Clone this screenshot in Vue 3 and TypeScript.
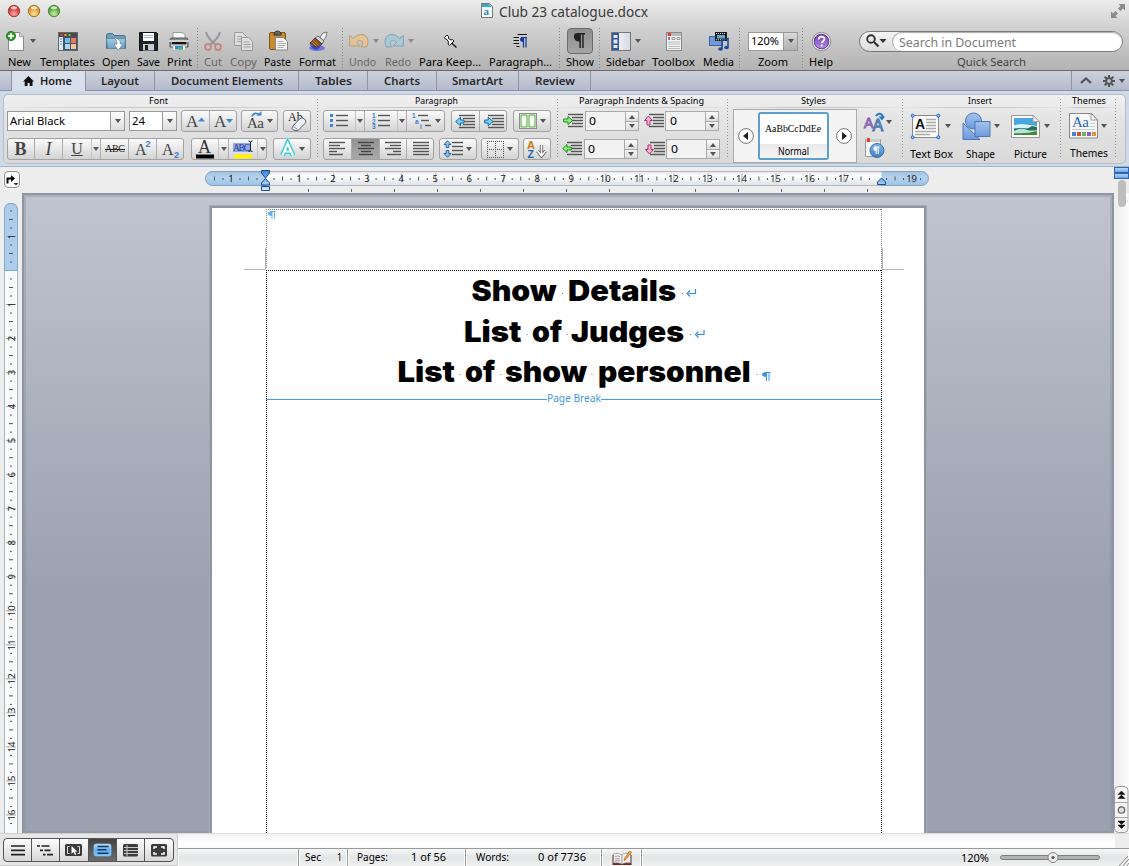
<script setup lang="ts">
import { h } from 'vue'

interface LabelProps { t: string; w: number; s?: number; c?: string; b?: number; f?: string; h?: number }

// Text fitted to a fixed width.
const Lbl = (p: LabelProps) => {
  const height = p.h ?? 14
  const size = p.s ?? 11.5
  return h('svg', { width: p.w, height, class: 'lbl', overflow: 'visible' }, [
    h('text', {
      x: 0, y: height - 3, textLength: p.w, lengthAdjust: 'spacingAndGlyphs',
      'font-size': size, 'font-weight': p.b ?? 400, fill: p.c ?? '#000',
      'font-family': p.f ?? '"Noto Sans", "Open Sans", sans-serif',
    }, p.t),
  ])
}
Lbl.props = ['t', 'w', 's', 'c', 'b', 'f', 'h']

const lines = (x: number, y: number, ws: number[], step = 3, c = '#555', offs: number[] = []) =>
  ws.map((w, i) => `<path d="M${x + (offs[i] ?? 0)} ${y + i * step}.5h${w}" stroke="${c}" stroke-width="1.4"/>`).join('')

const icons: Record<string, string> = {
  newdoc: '<path d="M3.5 4.500h11l4 4v14h-15z" transform="translate(-1 -3)" fill="#fdfdfd" stroke="#888"/><path d="M13.500 1.500v4h4" fill="#ddd" stroke="#999"/><circle cx="5" cy="5" r="4.600" fill="#2f9a28" stroke="#1d6e1a" stroke-width=".8"/><path d="M5 2.200v5.600M2.200 5h5.600" stroke="#fff" stroke-width="2"/>',
  templates: '<rect x=".5" y=".5" width="19" height="18" fill="#dbe8f4" stroke="#666"/><path d="M1 1h18v4H1z" fill="#4a4a4a"/><path d="M2.500 2h2v2h-2z" fill="#f33"/><path d="M6.500 2h2v2h-2z" fill="#fa3"/><path d="M10.500 2h2v2h-2z" fill="#5d3"/><path d="M5 5h14v13H5z" fill="#44556a"/><path d="M7 6h5v5H7z" fill="#76b8ec"/><path d="M13 6h5v5h-5z" fill="#e87a58"/><path d="M7 12h5v5H7z" fill="#aed6f5"/><path d="M13 12h5v5h-5z" fill="#f4c590"/><path d="M2 7h2M2 9.500h2M2 12h2" stroke="#5b93c6"/>',
  open: '<path d="M.5 3.500q0-2 2-2h4l2 2h9q2 0 2 2v11h-19z" fill="#6e9fbd" stroke="#44708d"/><path d="M.5 6.500h19l-1 10h-17z" fill="url(#gFolder)" stroke="#5b8baa"/><path d="M8 6c5 0 6.500 3 6.300 6h2.700l-4.800 6.500L8 12h3c0-3-.5-4-3-6z" fill="#fff" stroke="#5d7f95" stroke-width=".7"/>',
  save: '<path d="M.5.5h17l1 1v17H.5z" fill="#20252c" stroke="#111"/><path d="M4 1h11v8H4z" fill="#fff"/><path d="M5 3.500h9M5 5.500h9" stroke="#9bb3d0"/><path d="M4 12h11v6.500H4z" fill="#c7ccd2"/><path d="M6 13h3v5H6z" fill="#222"/>',
  print: '<path d="M4 7V.5h9l3 2V7" fill="#fff" stroke="#999"/><path d="M1 8q0-2 2-2h14q2 0 2 2v7H1z" fill="#8b8b8b" stroke="#555"/><path d="M0 8h20v2H0z" fill="#d0d0d0"/><path d="M3 10h14v2.500H3z" fill="#111"/><path d="M2 12.500h16v2H2z" fill="#ddd"/><path d="M4 13.500h12v5H4z" fill="#fff" stroke="#aaa" stroke-width=".6"/><path d="M6 14h8v3.500H6z" fill="#2b8bd0"/><path d="M9 15h5v2.500H9z" fill="#48b070"/>',
  cut: '<g opacity=".6"><path d="M2 0c1 4 5 9 10 13M16 0c-1 4-5 9-10 13" stroke="#777" stroke-width="2" fill="none"/><ellipse cx="4" cy="15" rx="3" ry="3" fill="none" stroke="#c8604e" stroke-width="1.800"/><ellipse cx="14" cy="15" rx="3" ry="3" fill="none" stroke="#c8604e" stroke-width="1.800"/></g>',
  copy: '<g opacity=".55"><path d="M.5.5h8l4 4v9H.5z" fill="#eee" stroke="#777"/><path d="M3 4.500h5M3 7h6M3 9.500h4" stroke="#888"/><path d="M7.500 5.500h7l4 4v9h-11z" fill="#f2f2f2" stroke="#777"/><path d="M9.500 10h6M9.500 12.500h7M9.500 15h7" stroke="#888"/></g>',
  paste: '<rect x=".5" y="1.500" width="16" height="17" rx="1.500" fill="#c88c2d" stroke="#805413"/><path d="M5 4V2q3.500-4 7 0v2z" fill="#666" stroke="#333"/><path d="M6.500 6.500h8l4 4v8.500h-12z" fill="#f6f6f6" stroke="#888"/><path d="M8.500 10.500h6M8.500 12.500h8M8.500 14.500h8M8.500 16.500h6" stroke="#999" stroke-width=".8"/>',
  format: '<ellipse cx="9" cy="16" rx="8" ry="3" fill="#5d66dc" opacity=".8"/><path d="M12 5l3-4 4-1-1 5-3 4z" fill="#efefef" stroke="#777"/><path d="M10 4l6 5-2 3-7-6z" fill="#d5d8dc" stroke="#666"/><path d="M7 6l7 6-4 3q-4 1-8-4z" fill="#8a5420" stroke="#4e2d10" stroke-width=".8"/><path d="M1 11q4 5 9 4l3-1-4 4q-5 0-8-7z" fill="#2b47d9"/><path d="M5 8l5 5M3.500 9.500l5 5" stroke="#c8914d" stroke-width=".7"/>',
  undo: '<path d="M.7 2.500v10.500h10.500L7.300 9.500c3-3.500 7-2 6.500 1.500-.2 1-.8 2-1.500 3h5c3.500-5 1.500-12-4.500-12.500C9.500 1.300 6.500 3 4.500 5.500z" fill="#e3c498" stroke="#b39a72" stroke-width=".9"/>',
  redo: '<path transform="matrix(-1 0 0 1 20 0)" d="M.7 2.500v10.500h10.500L7.300 9.500c3-3.500 7-2 6.500 1.500-.2 1-.8 2-1.500 3h5c3.500-5 1.500-12-4.500-12.500C9.500 1.300 6.500 3 4.500 5.500z" fill="#a9c8d8" stroke="#7a9fb3" stroke-width=".9"/>',
  pin: '<path d="M8 8.500l5.500 5" stroke="#111" stroke-width="1.300"/><path d="M1.500 3.500L4 1l1.500 1.500v2L8 6l1.500-.5L11 7l-4.500 4.500L5 10l.5-2L4 5.500 2.500 5z" fill="#fff" stroke="#111"/>',
  para: '<path d="M4.500.5h9.500M.5 3.500h5.500M.5 6.500h5.500M.5 9.500h5.500M3.500 12.500h3M10 3.500h4" stroke="#111"/><path d="M8 3.500h5v10M10.500 3.500v10" stroke="#163a9b" stroke-width="1.200" fill="none"/><path d="M10 3c-4 0-4 5 0 5z" fill="#163a9b"/>',
  show: '<path d="M5 0h8v1.600h-1.300V15h-1.500V1.600H8.900V15H7.400V8.500C.5 8.500.5 0 5 0z" fill="#222"/>',
  sidebar: '<rect x=".5" y=".5" width="19" height="18" fill="url(#gWin)" stroke="#777"/><path d="M1 1h7v17H1z" fill="#3355a5"/><path d="M2.500 3h4v3h-4zM2.500 7.500h4v4h-4zM2.500 13h4v3h-4z" fill="#e2eaf8"/>',
  toolbox: '<rect x=".5" y=".5" width="15" height="18" fill="#f3f3f3" stroke="#888"/><path d="M1 1h14v3H1z" fill="#bbb"/><path d="M2 1h3v3H2z" fill="#e33"/><path d="M6 5.500h3v2H6zM11 5.500h3v2h-3z" fill="none" stroke="#888" stroke-width=".8"/><path d="M2 10h12M2 12h12M2 14.500h12M2 16.500h12" stroke="#bbb"/><path d="M2 5h2v3H2z" fill="#888"/>',
  media: '<rect x=".5" y="4.500" width="13" height="9" fill="#6f9bd6" stroke="#3b61a3"/><rect x="6" y="0" width="12" height="9" fill="#1d1d1d"/><path d="M7 1.500h10M7 7.700h10" stroke="#ddd" stroke-dasharray="1 1"/><path d="M8 3h8v3.500H8z" fill="#69a9c6"/><path d="M13 17V8l6-1.500V15" fill="none" stroke="#204a94" stroke-width="1.600"/><ellipse cx="11.500" cy="17" rx="2.300" ry="1.800" fill="#204a94"/><ellipse cx="17.500" cy="15.500" rx="2.300" ry="1.800" fill="#204a94"/>',
  help: '<circle cx="9.500" cy="9.500" r="9.200" fill="#eee" stroke="#8d8d8d"/><circle cx="9.500" cy="9.500" r="7.300" fill="url(#gHelp)" stroke="#5f389e"/><path d="M6.700 7.600c0-4 5.800-3.800 5.800-.5 0 2-2.700 2.200-2.700 4" fill="none" stroke="#fff" stroke-width="1.700"/><circle cx="9.800" cy="13.600" r="1.100" fill="#fff"/>',
  home: '<path d="M5.500 0L11 5.500H9.500V10H6.700V7H4.500v3H1.700V5.500H0z" fill="#111"/>',
  grow: '<text x="0" y="15" font-family="Liberation Serif" font-size="17" fill="#444">A</text><path d="M12 9.500l3.500-4 3.500 4z" fill="#3d87d8"/>',
  shrink: '<text x="0" y="15" font-family="Liberation Serif" font-size="17" fill="#444">A</text><path d="M12 7l3.500 4L19 7z" fill="#3d87d8"/>',
  aa: '<text x="0" y="17" font-family="Liberation Serif" font-size="15" textLength="17" fill="#444">Aa</text><path d="M5 5.500c1.500-4 6-4 7-1" fill="none" stroke="#3b84ce" stroke-width="1.600"/><path d="M9.500 4.500h5V0z" fill="#3b84ce"/>',
  clear: '<text x="0" y="10" font-family="Liberation Serif" font-size="12" fill="#222">Ab</text><path d="M4.500 15.500l7.500-8q2-1.500 4.500.5t.5 4.500l-7 7q-2 1-4.500-.5t-1-3.500z" fill="#eef1f8" stroke="#59616f"/><path d="M4.500 15.500q3.500.5 5.500 4" fill="none" stroke="#8a93a4"/>',
  abc: '<text x="0" y="9" font-family="Liberation Serif" font-size="10" textLength="20" fill="#222">ABC</text><path d="M0 6.500h20" stroke="#222"/>',
  sup: '<text x="0" y="16" font-family="Liberation Serif" font-size="16" fill="#444">A</text><text x="10.500" y="8" font-family="Liberation Sans" font-size="9" font-weight="700" fill="#3d7fd0">2</text>',
  sub: '<text x="0" y="16" font-family="Liberation Serif" font-size="16" fill="#444">A</text><text x="12" y="18.500" font-family="Liberation Sans" font-size="9" font-weight="700" fill="#3d7fd0">2</text>',
  color: '<text x="2" y="13" font-family="Liberation Serif" font-size="18" fill="#333">A</text><path d="M0 14.500h18v4H0z" fill="#000"/>',
  hilite: '<path d="M0 3h18v9H0z" fill="#8fa9e8"/><text x="0" y="11" font-family="Liberation Serif" font-size="9.500" textLength="17" fill="#223a8c">ABC</text><path d="M1 14.500h18v4H1z" fill="#fff200"/><path d="M15.500 1q2 0 2 1.500 0-1.500 2-1.500M17.500 2v8M15.500 11.500q2 0 2-1.500 0 1.500 2 1.500" fill="none" stroke="#222"/>',
  glow: '<path d="M2.500 15.500L7.700 3.500 13 15.500M4.500 11.500h6.500" fill="none" stroke="#9ce6ee" stroke-width="6"/><path d="M2.500 15.500L7.700 3.500 13 15.500M4.500 11.500h6.500" fill="none" stroke="#35c6d8" stroke-width="4.500"/><path d="M2.500 15.500L7.700 3.500 13 15.500M4.500 11.500h6.500" fill="none" stroke="#fff" stroke-width="2.200"/>',
  bullets: '<path d="M0 1h3v3H0zM0 6h3v3H0zM0 11h3v3H0z" fill="#3d87d8"/>' + lines(6, 2, [12, 12, 12], 5),
  numbers: '<text font-family="Liberation Sans" font-weight="700" font-size="6.500" fill="#3d7fd0"><tspan x="0" y="5">1</tspan><tspan x="0" y="10.500">2</tspan><tspan x="0" y="16">3</tspan></text>' + lines(6, 2, [12, 12, 12], 5),
  multi: '<text font-family="Liberation Sans" font-weight="700" font-size="6.500" fill="#3d7fd0"><tspan x="0" y="5">1</tspan><tspan x="3" y="10.500">a</tspan><tspan x="8" y="16">i</tspan></text>' + lines(6, 2, [10, 8, 6], 5, '#555', [0, 3, 7]),
  outdent: lines(4, 1, [16, 12, 12, 12, 16], 3, '#555', [0, 4, 4, 4, 0]) + '<path d="M.7 7.500l4.800-4.300v2.800h3.500v3H5.500v2.800z" fill="#7fd0f5" stroke="#1468a8"/>',
  indent: lines(4, 1, [16, 12, 12, 12, 16], 3, '#555', [0, 4, 4, 4, 0]) + '<path d="M9 7.500L4.200 3.200v2.800H.7v3h3.500v2.800z" fill="#7fd0f5" stroke="#1468a8"/>',
  columns: '<rect x=".5" y=".5" width="17" height="15" fill="#fff" stroke="#8e8e8e"/><path d="M2 2h6v12H2zM10 2h6v12h-6z" fill="#f4fff0" stroke="#4ca33a"/>',
  left: lines(0, 0, [16, 11, 16, 8, 14], 3),
  center: lines(0, 0, [16, 10, 16, 10, 14], 3, '#444', [0, 3, 0, 3, 1]),
  right: lines(0, 0, [16, 11, 16, 8, 14], 3, '#555', [0, 5, 0, 8, 2]),
  full: lines(0, 0, [16, 16, 16, 16, 16], 3),
  spacing: '<path d="M3.500.7L7 4.500H4.800v3H2.200v-3H0zM3.500 17.300L0 13.500h2.200v-3h2.600v3H7z" fill="#8fc2f5" stroke="#23599c" stroke-width=".9"/>' + lines(8, 2, [11, 11, 11, 11], 4),
  borders: '<path d="M0 .5h17M0 8.500h17M0 16.500h17M.5 0v17M8.500 0v17M16.500 0v17" fill="none" stroke="#555" stroke-dasharray="1 1"/>',
  sort: '<text x="0" y="8.500" font-family="Liberation Sans" font-weight="700" font-size="11" fill="#c8791c">A</text><text x="0.500" y="18" font-family="Liberation Sans" font-weight="700" font-size="10.500" fill="#275fae">Z</text><path d="M14.500 5v10m-4-4l4 5 4-5" fill="none" stroke="#555" stroke-width="3.200"/><path d="M14.500 5v10m-4-4l4 5 4-5" fill="none" stroke="#fff" stroke-width="1.600"/>',
  inL: lines(5, 0, [15, 11, 11, 11, 15], 3, '#555', [0, 4, 4, 4, 0]) + '<path d="M9.500 6.500L5 2.500v2.500H.7v3H5v2.500z" fill="#8df07a" stroke="#1d8f1c"/>',
  inR: lines(5, 0, [15, 11, 11, 11, 15], 3, '#555', [0, 4, 4, 4, 0]) + '<path d="M.7 6.500L5 2.500v2.500h4.300v3H5v2.500z" fill="#8df07a" stroke="#1d8f1c"/>',
  up: lines(5, 0, [15, 11, 11, 11, 15], 3, '#555', [0, 4, 4, 4, 0]) + '<path d="M4.500 2l4 4.500H6v4.500H3V6.500H.5z" fill="#f7b6d4" stroke="#b5316f"/>',
  down: lines(5, 0, [15, 11, 11, 11, 15], 3, '#555', [0, 4, 4, 4, 0]) + '<path d="M4.500 12l4-4.500H6V3H3v4.500H.5z" fill="#f7b6d4" stroke="#b5316f"/>',
  aas: '<text x="-1" y="15.500" font-family="Liberation Sans" font-size="14" fill="#c9b0e0" stroke="#8a62b5" stroke-width="1">A</text><text x="7.500" y="18.500" font-family="Liberation Sans" font-size="16" fill="#a8c8ec" stroke="#4274ad" stroke-width="1">A</text><path d="M11 4c2-3.500 6-3 7 1" stroke="#2577c4" stroke-width="2" fill="none"/><path d="M13.500 4.500h6.500l-3 4z" fill="#2577c4"/>',
  pane: '<path d="M.5 1.500h15v17H.5z" fill="#f7f7f7" stroke="#999"/><path d="M1 1h14v3H1z" fill="#ccc"/><path d="M2 0h3v4H2z" fill="#e0402d"/><circle cx="12" cy="12.500" r="7" fill="url(#gBlue)" stroke="#3870b0"/><path d="M9.500 9h5M13.200 9v7M11.200 9v7" stroke="#fff" stroke-width="1.100"/><path d="M11 8.500c-3.500 0-3.500 4.500 0 4.500z" fill="#fff"/>',
  textbox: '<rect x="1.500" y="1.500" width="26" height="22" fill="#fafafa" stroke="#888"/><text x="4" y="15" font-family="Liberation Sans" font-weight="700" font-size="14" fill="#111">A</text><path d="M15 5.500h10M15 8.500h10M15 11.500h10M15 14.500h10M4 17.500h21M4 20.500h15" stroke="#aaa" stroke-width="1.300"/><g fill="#9cc6ff" stroke="#1763df"><circle cx="1.700" cy="1.700" r="1.500"/><circle cx="27.300" cy="1.700" r="1.500"/><circle cx="1.700" cy="23.300" r="1.500"/><circle cx="27.300" cy="23.300" r="1.500"/></g>',
  shape: '<circle cx="11.500" cy="9" r="8" fill="url(#gShape)" stroke="#4c78b8"/><path d="M1 11v16.500h17z" fill="url(#gShape)" stroke="#4c78b8"/><rect x="13" y="9.500" width="15" height="15" fill="url(#gShape)" stroke="#4c78b8"/>',
  picture: '<path d="M.5 1.500h22l6 6v16H.5z" fill="#fcfcfc" stroke="#999"/><path d="M3 4h19l4 4v13H3z" fill="#49a6dc"/><path d="M3 11l8-1 15 2v2H3z" fill="#d9f3fb"/><path d="M3 15l8-1 5 1 5-3 5 1v8H3z" fill="#2d6f58"/><path d="M3 17q7-4 13-1 5 1 10 0v4l-12 1H3z" fill="#bce4dc"/><path d="M3 19q12 1 23-2v4H3z" fill="#438a35"/><path d="M22 1.500l6.500 6h-6.500z" fill="#eee" stroke="#aaa"/>',
  theme: '<path d="M.5.5h22l6 6v18.500H.5z" fill="#f8f8f8" stroke="#888"/><path d="M22 .5l6.500 6.500h-6.500z" fill="#fff" stroke="#999"/><text x="3" y="14" font-family="Liberation Serif" font-size="15" textLength="17" fill="#2d66b3">Aa</text><path d="M21 10.500h5M21 13.500h5M3 16.500h23" stroke="#ccc"/><path d="M3 19h4v4H3z" fill="#4d83c4"/><path d="M8 19h4v4H8z" fill="#cf4e45"/><path d="M13 19h4v4h-4z" fill="#7eb04e"/><path d="M18 19h4v4h-4z" fill="#8b5fc2"/><path d="M23 19h4v4h-4z" fill="#e5923e"/>',
  docx: '<path d="M.5.5h8l3 3v11H.5z" fill="#f3fafe" stroke="#777"/><path d="M1 1h7l3 3H1z" fill="#3ea7c9"/><text x="2.500" y="12" font-family="Liberation Serif" font-weight="700" font-size="11" fill="#3789b4">a</text>',
  full2: '<path d="M7.500 0H14v6.500L12 4.500 9.500 7 7 4.500 9.500 2zM6.500 14H0V7.500l2 2L4.500 7 7 9.500 4.500 12z" fill="#8b8b8b"/>',
  mag: '<circle cx="5" cy="5" r="3.800" fill="none" stroke="#333" stroke-width="1.900"/><path d="M8 8l4.500 4.500" stroke="#333" stroke-width="2.300"/><path d="M13.500 5h7L17 9z" fill="#333"/>',
  gear: '<g stroke="#555" stroke-width="2"><path d="M6 0v12M0 6h12M1.700 1.700l8.600 8.600M1.700 10.300l8.600-8.600"/></g><circle cx="6" cy="6" r="3.700" fill="#555"/><circle cx="6" cy="6" r="1.900" fill="#c0c4d2"/>',
  chev: '<path d="M1 6l5-4.500L11 6" fill="none" stroke="#555" stroke-width="2.200"/>',
  tab: '<path d="M1.500 8.500V3.500h4" fill="none" stroke="#000" stroke-width="2"/><path d="M5 0l4 3.500L5 7z" fill="#000"/><path d="M7.500 8h5L10 10.500z" fill="#333"/>',
  book: '<path d="M.5 5h19v10H.5z" fill="#6a2a24"/><path d="M1.500 4q5-2 8.500 1 3-3 8.500-1v9q-5-1-8.500 1-4-2-8.500-1z" fill="#f4f2ee" stroke="#888" stroke-width=".7"/><path d="M10 5v9M3 6.500q3-1 5 0M3 9q3-1 5 0M3 11q3-1 5 0" stroke="#999" fill="none"/><path d="M12.500 8.500L17.500 1l2 1-5.500 7.500-2 1z" fill="#f0a23c" stroke="#a8551d" stroke-width=".6"/>',
  v1: '<path d="M0 1h14M0 5.300h14M0 9.600h14" transform="translate(3 2)" stroke="#222" stroke-width="1.700"/>',
  v2: '<path d="M1 3h3M5.500 3h8M4 7.300h3M8.500 7.300h6M7 11.600h2.500M11 11.600h6" stroke="#222" stroke-width="1.700"/>',
  v3: '<rect x="1" y="1" width="17" height="12" rx="1.500" fill="#3b3b3b"/><path d="M5.500 3.500h-2v7h2M13.500 3.500h2v7h-2" stroke="#ddd" fill="none"/><path d="M7.500 3v8l2-2 1.500 3 1.200-.6L11 8.500h2.500z" fill="#fff"/>',
  v4: '<rect x="1" y="1" width="17" height="12" rx="2" fill="url(#gSel)" stroke="#9fd3ff" stroke-width=".6"/><path d="M4.500 3.500h11M4.500 6.800h9M4.500 10.200h11" stroke="#15365c" stroke-width="1.600"/>',
  v5: '<rect x="2" y="1" width="15" height="12.500" rx="1.500" fill="#3b3b3b"/><path d="M3 4.500h14M3 7.500h14M3 10.500h14M6 2v11" stroke="#c9c9c9"/>',
  v6: '<rect x="2" y="1" width="16" height="12.500" rx="1.500" fill="#3b3b3b"/><path d="M5 6V4h3M12 4h3v2M15 9v2h-3M8 11H5V9" stroke="#fff" stroke-width="1.500" fill="none"/>',
}

interface Tool { gap: number; w: number; label?: string; icon?: string; iw?: number; ih?: number; dx?: number; caret?: number; c?: string; sep?: boolean }
const tools: Tool[] = [
  { gap: 8, w: 23, label: 'New', icon: 'newdoc', iw: 20, ih: 20, dx: -4, caret: 13 },
  { gap: 9, w: 55, label: 'Templates', icon: 'templates', iw: 20, ih: 19 },
  { gap: 7, w: 28, label: 'Open', icon: 'open', iw: 20, ih: 19 },
  { gap: 7, w: 23, label: 'Save', icon: 'save', iw: 19, ih: 19 },
  { gap: 7, w: 25, label: 'Print', icon: 'print', iw: 20, ih: 19, dx: -0.5 },
  { gap: 5, w: 1, sep: true },
  { gap: 6, w: 18, label: 'Cut', icon: 'cut', iw: 18, ih: 19, c: '#666' },
  { gap: 8, w: 27, label: 'Copy', icon: 'copy', iw: 19, ih: 19, c: '#666' },
  { gap: 7, w: 27, label: 'Paste', icon: 'paste', iw: 19, ih: 20, dx: 0.5 },
  { gap: 8, w: 37, label: 'Format', icon: 'format', iw: 20, ih: 19 },
  { gap: 6, w: 1, sep: true },
  { gap: 6, w: 27, label: 'Undo', icon: 'undo', iw: 20, ih: 17, dx: -4, caret: 13, c: '#666' },
  { gap: 9, w: 26, label: 'Redo', icon: 'redo', iw: 20, ih: 17, dx: -4, caret: 13, c: '#666' },
  { gap: 8, w: 62, label: 'Para Keep…', icon: 'pin', iw: 14, ih: 15 },
  { gap: 8, w: 63, label: 'Paragraph…', icon: 'para', iw: 15, ih: 15 },
  { gap: 7, w: 1, sep: true },
  { gap: 6, w: 28, label: 'Show', icon: 'show', iw: 16, ih: 16 },
  { gap: 5, w: 1, sep: true },
  { gap: 6, w: 39, label: 'Sidebar', icon: 'sidebar', iw: 20, ih: 19, dx: -4.5, caret: 12.5 },
  { gap: 7, w: 43, label: 'Toolbox', icon: 'toolbox', iw: 16, ih: 19 },
  { gap: 8, w: 31, label: 'Media', icon: 'media', iw: 20, ih: 19 },
  { gap: 5, w: 1, sep: true },
]

const tabs = [
  { t: 'Layout', w: 69, l: 38 }, { t: 'Document Elements', w: 144, l: 112 }, { t: 'Tables', w: 69, l: 37 },
  { t: 'Charts', w: 69, l: 36 }, { t: 'SmartArt', w: 82, l: 51 }, { t: 'Review', w: 72, l: 40 },
]

const U = 34.03
const hNums = Array.from({ length: 21 }, (_, i) => i - 1).filter(n => n !== 0 && n !== 18 && n < 20)
const hTicks: { x: number; k: number }[] = []
for (let q = -6; q <= 77; q++) if (q % 4 !== 0) hTicks.push({ x: 60.5 + (q * U) / 4, k: Math.abs(q % 2) })
const hTabs = Array.from({ length: 14 }, (_, i) => 103 + i * 43)
const vNums = Array.from({ length: 18 }, (_, i) => i - 1).filter(n => n !== 0)
const vTicks: { y: number; k: number }[] = []
for (let q = -7; q <= 65; q++) if (q % 4 !== 0) vTicks.push({ y: 67.5 + (q * U) / 4, k: Math.abs(q % 2) })

const heads = [
  { h: 41, words: [['Show', 205.5, 85], ['Details', 302, 108]], dots: [296.5, 416.5], end: 420, ret: true },
  { h: 40, words: [['List', 198, 57.500], ['of', 266, 30], ['Judges', 305, 113]], dots: [261, 301, 424.5], end: 428.5, ret: true },
  { h: 41, words: [['List', 131.5, 57.500], ['of', 199, 30], ['show', 239, 82], ['personnel', 332, 152.500]], dots: [194, 235, 326, 491], end: 495.5, ret: false },
] as { h: number; words: [string, number, number][]; dots: number[]; end: number; ret: boolean }[]

const views = ['v1', 'v2', 'v3', 'v4', 'v5', 'v6']
</script>

<template>
  <div class="win">
    <svg class="defs" width="0" height="0">
      <defs>
        <linearGradient id="gFolder" x2="0" y2="1"><stop offset="0" stop-color="#a5cbe0" /><stop offset="1" stop-color="#6fa3c2" /></linearGradient>
        <linearGradient id="gWin" x2="1" y2="0"><stop offset="0" stop-color="#fff" /><stop offset="1" stop-color="#d5d8e6" /></linearGradient>
        <linearGradient id="gHelp" x2="0" y2="1"><stop offset="0" stop-color="#7040b4" /><stop offset="1" stop-color="#b48be6" /></linearGradient>
        <linearGradient id="gBlue" x2="0" y2="1"><stop offset="0" stop-color="#86b7e8" /><stop offset="1" stop-color="#3f7fc6" /></linearGradient>
        <linearGradient id="gShape" x2="0" y2="1"><stop offset="0" stop-color="#a5c5ee" /><stop offset="1" stop-color="#6d9adc" /></linearGradient>
        <linearGradient id="gSel" x2="0" y2="1"><stop offset="0" stop-color="#b4dcfa" /><stop offset=".5" stop-color="#5fb0f0" /><stop offset="1" stop-color="#78c4f8" /></linearGradient>
        <linearGradient id="gPill" x2="0" y2="1"><stop offset="0" stop-color="#e6e9ec" /><stop offset=".3" stop-color="#fff" /><stop offset="1" stop-color="#dfe3e7" /></linearGradient>
        <linearGradient id="gPillB" x2="0" y2="1"><stop offset="0" stop-color="#a3c2de" /><stop offset=".4" stop-color="#b4d2ee" /><stop offset="1" stop-color="#9fc3e4" /></linearGradient>
        <linearGradient id="gMark" x2="0" y2="1"><stop offset="0" stop-color="#3d86d8" /><stop offset="1" stop-color="#d5ecff" /></linearGradient>
        <radialGradient id="gR" cy=".75"><stop offset="0" stop-color="#ffa9a0" /><stop offset="1" stop-color="#d63d3d" /></radialGradient>
        <radialGradient id="gY" cy=".75"><stop offset="0" stop-color="#ffe49a" /><stop offset="1" stop-color="#e39a35" /></radialGradient>
        <radialGradient id="gG" cy=".75"><stop offset="0" stop-color="#c8f2a8" /><stop offset="1" stop-color="#5ba33f" /></radialGradient>
      </defs>
    </svg>

    <header class="chrome">
      <div class="title">
        <svg class="lights" width="56" height="14">
          <g stroke-width=".9">
            <circle cx="7" cy="7" r="5.700" fill="url(#gR)" stroke="#8d3431" />
            <circle cx="27" cy="7" r="5.700" fill="url(#gY)" stroke="#966626" />
            <circle cx="47" cy="7" r="5.700" fill="url(#gG)" stroke="#4b7a34" />
          </g>
          <g fill="#fff" opacity=".75"><ellipse cx="7" cy="3.800" rx="3" ry="1.500" /><ellipse cx="27" cy="3.800" rx="3" ry="1.500" /><ellipse cx="47" cy="3.800" rx="3" ry="1.500" /></g>
        </svg>
        <div class="name">
          <svg width="12" height="15" v-html="icons.docx" />
          <Lbl t="Club 23 catalogue.docx" :w="149" :s="13.5" :h="18" c="#3a3a3a" />
        </div>
        <svg class="fs" width="14" height="14" v-html="icons.full2" />
      </div>
      <div class="tools">
        <div v-for="(k, i) in tools" :key="i" :class="k.sep ? 'tsep' : 'tool'" :style="{ marginLeft: k.gap + 'px', width: k.w + 'px' }">
          <template v-if="!k.sep">
            <div class="ticon" :class="{ pressed: k.label === 'Show' }">
              <svg :width="k.iw" :height="k.ih" :style="{ marginLeft: (k.dx ?? 0) * 2 + 'px' }" v-html="icons[k.icon!]" />
              <i v-if="k.caret" class="caret tc" :class="{ dim: k.c }" :style="{ left: k.w / 2 + k.caret + 'px' }" />
            </div>
            <Lbl :t="k.label!" :w="k.w" :c="k.c" />
          </template>
        </div>
        <div class="tool zoom">
          <div class="ticon"><div class="zbox"><Lbl t="120%" :w="28" :s="11.5" /><b><i class="caret" /></b></div></div>
          <Lbl t="Zoom" :w="30" />
        </div>
        <div class="tsep zs" />
        <div class="tool hp">
          <div class="ticon"><svg width="19" height="19" v-html="icons.help" /></div>
          <Lbl t="Help" :w="24" />
        </div>
        <div class="tool srch">
          <div class="ticon">
            <div class="sbox"><svg width="26" height="14" v-html="icons.mag" /><div><Lbl t="Search in Document" :w="117" :s="12.5" :h="15" c="#7b7b7b" /></div></div>
          </div>
          <Lbl t="Quick Search" :w="69" c="#444" />
        </div>
      </div>
    </header>

    <nav class="tabs">
      <div class="tab home"><svg width="11" height="10" v-html="icons.home" /><Lbl t="Home" :w="32" :b="600" :s="11.5" c="#222" /></div>
      <div v-for="t in tabs" :key="t.t" class="tab" :style="{ width: t.w + 'px' }"><Lbl :t="t.t" :w="t.l" :b="600" :s="11.5" c="#2b2b2b" /></div>
      <div class="tend"><svg width="12" height="8" v-html="icons.chev" /><svg width="12" height="12" v-html="icons.gear" /><i class="caret" /></div>
    </nav>

    <section class="ribbonwrap">
      <div class="ribbon">
        <div class="grp g1">
          <h6><Lbl t="Font" :w="19" :s="9.5" :h="13" /></h6>
          <div class="row">
            <div class="combo c1"><Lbl t="Arial Black" :w="55" :s="11.5" /><b><i class="caret" /></b></div>
            <div class="combo c2"><Lbl t="24" :w="13" :s="11.5" /><b><i class="caret" /></b></div>
            <div class="btns"><span class="w28"><svg width="19" height="18" v-html="icons.grow" /></span><span class="w28"><svg width="19" height="18" v-html="icons.shrink" /></span></div>
            <div class="btns m4"><span class="w37"><svg width="17" height="20" v-html="icons.aa" /><i class="caret" /></span></div>
            <div class="btns m5"><span class="w28"><svg width="19" height="20" v-html="icons.clear" /></span></div>
          </div>
          <div class="row">
            <div class="btns">
              <span class="w27 ser bold">B</span><span class="w28 ser ital">I</span><span class="w29 ser und">U</span><span class="w9"><i class="caret" /></span>
              <span class="w28"><svg width="20" height="12" v-html="icons.abc" /></span><span class="w28"><svg width="16" height="20" v-html="icons.sup" /></span><span class="w28"><svg width="18" height="20" v-html="icons.sub" /></span>
            </div>
            <div class="btns m7"><span class="w27"><svg width="18" height="18" v-html="icons.color" /></span><span class="w10"><i class="caret" /></span><span class="w29"><svg width="20" height="18" v-html="icons.hilite" /></span><span class="w10"><i class="caret" /></span></div>
            <div class="btns m6"><span class="w38"><svg width="16" height="18" v-html="icons.glow" /><i class="caret" /></span></div>
          </div>
        </div>

        <div class="grp g2">
          <h6><Lbl t="Paragraph" :w="43" :s="9.5" :h="13" /></h6>
          <div class="row">
            <div class="btns">
              <span class="w32"><svg width="18" height="16" v-html="icons.bullets" /></span><span class="w9"><i class="caret" /></span>
              <span class="w33"><svg width="18" height="16" v-html="icons.numbers" /></span><span class="w9"><i class="caret" /></span>
              <span class="w39"><svg width="20" height="16" v-html="icons.multi" /><i class="caret" /></span>
            </div>
            <div class="btns m6"><span class="w28"><svg width="20" height="15" v-html="icons.outdent" /></span><span class="w28"><svg width="20" height="15" v-html="icons.indent" /></span></div>
            <div class="btns m6"><span class="w38"><svg width="18" height="16" v-html="icons.columns" /><i class="caret" /></span></div>
          </div>
          <div class="row">
            <div class="btns">
              <span class="w28"><svg width="16" height="15" v-html="icons.left" /></span><span class="w28 on"><svg width="16" height="15" v-html="icons.center" /></span>
              <span class="w27"><svg width="16" height="15" v-html="icons.right" /></span><span class="w28"><svg width="16" height="15" v-html="icons.full" /></span>
            </div>
            <div class="btns m5"><span class="w38"><svg width="19" height="18" v-html="icons.spacing" /><i class="caret" /></span></div>
            <div class="btns m4"><span class="w38"><svg width="17" height="17" v-html="icons.borders" /><i class="caret" /></span></div>
            <div class="btns m4"><span class="w28"><svg width="20" height="18" v-html="icons.sort" /></span></div>
          </div>
        </div>

        <div class="grp g3">
          <h6><Lbl t="Paragraph Indents &amp; Spacing" :w="125" :s="9.5" :h="13" /></h6>
          <div class="row">
            <svg width="20" height="15" v-html="icons.inL" /><div class="num"><Lbl t="0" :w="7" :s="11.5" /><b><i class="tri" /><i class="caret" /></b></div>
            <svg class="m5" width="20" height="15" v-html="icons.up" /><div class="num"><Lbl t="0" :w="7" :s="11.5" /><b><i class="tri" /><i class="caret" /></b></div>
          </div>
          <div class="row r2">
            <svg width="20" height="15" v-html="icons.inR" /><div class="num"><Lbl t="0" :w="7" :s="11.5" /><b><i class="tri" /><i class="caret" /></b></div>
            <svg class="m6" width="20" height="15" v-html="icons.down" /><div class="num"><Lbl t="0" :w="7" :s="11.5" /><b><i class="tri" /><i class="caret" /></b></div>
          </div>
        </div>

        <div class="grp g4">
          <h6><Lbl t="Styles" :w="25" :s="9.5" :h="13" /></h6>
          <div class="styles">
            <div class="gallery">
              <svg width="16" height="16"><circle cx="8" cy="8" r="7.400" fill="#fff" stroke="#777" /><path d="M10 4v8L5 8z" fill="#222" /></svg>
              <div class="card"><div><Lbl t="AaBbCcDdEe" :w="56" :s="10.5" f="Liberation Serif" /></div><p><Lbl t="Normal" :w="31" :s="10" :h="13" /></p></div>
              <svg width="16" height="16"><circle cx="8" cy="8" r="7.400" fill="#fff" stroke="#777" /><path d="M6 4v8l5-4z" fill="#222" /></svg>
            </div>
            <div class="side">
              <div><svg width="20" height="20" v-html="icons.aas" /><i class="caret" /></div>
              <div><svg width="20" height="20" v-html="icons.pane" /></div>
            </div>
          </div>
        </div>

        <div class="grp g5">
          <h6><Lbl t="Insert" :w="24" :s="9.5" :h="13" /></h6>
          <div class="bigs">
            <div class="big b1"><div><svg width="29" height="25" v-html="icons.textbox" /><i class="caret" /></div><Lbl t="Text Box" :w="43" :s="10.8" /></div>
            <div class="big b2"><div><svg width="29" height="29" v-html="icons.shape" /><i class="caret" /></div><Lbl t="Shape" :w="29" :s="10.8" /></div>
            <div class="big b3"><div><svg width="30" height="25" v-html="icons.picture" /><i class="caret" /></div><Lbl t="Picture" :w="33" :s="10.8" /></div>
          </div>
        </div>

        <div class="grp g6">
          <h6><Lbl t="Themes" :w="34" :s="9.5" :h="13" /></h6>
          <div class="bigs th"><div class="big"><div><svg width="30" height="26" v-html="icons.theme" /><i class="caret" /></div><Lbl t="Themes" :w="38" :s="10.8" /></div></div>
        </div>
      </div>
    </section>

    <section class="hruler">
      <div class="tabbtn"><svg width="13" height="12" v-html="icons.tab" /></div>
      <svg class="hr" width="724" height="28">
        <rect x=".5" y="4.500" width="723" height="14" rx="7" fill="url(#gPillB)" stroke="#7fa3c5" />
        <path d="M60.500 5h616v13h-616z" fill="url(#gPill)" /><path d="M60 4.500h616M60 18.500h616" stroke="#b5b9bd" />
        <path v-for="(t, i) in hTicks" :key="'t' + i" :d="t.k ? `M${t.x} 11v2` : `M${t.x} 9.500v4`" stroke="#555" />
        <template v-for="n in hNums" :key="n">
          <path :d="`M${60.5 + n * U} 6.500v9`" stroke="#aaa" />
          <text :x="60 + n * U" y="14.800" text-anchor="middle" font-family="Noto Sans" font-size="9.500" fill="#222">{{ Math.abs(n) }}</text>
        </template>
        <path v-for="x in hTabs" :key="x" :d="`M${x}.5 22v3`" stroke="#667" />
        <g stroke="#164d92" fill="url(#gMark)"><path d="M56.500 3.500h8v2.500l-4 5-4-5zM60.500 11.500l4 4.500v2h-8v-2zM56.500 19.500h8v4h-8zM672.500 17.500v-2.500l4-4 4 4v2.500z" /></g>
      </svg>
      <div class="split"><i /><i /></div>
    </section>

    <main class="body">
      <aside class="vruler">
        <svg width="14" height="630">
          <path d="M.5 700V7.500q0-7 6.500-7t6.500 7V700" fill="#f8fafb" stroke="#aab5c0" />
          <path d="M.5 67.500V7.500q0-7 6.500-7t6.500 7v60z" fill="#aecded" stroke="#86a8c9" />
          <path v-for="(t, i) in vTicks" :key="i" :d="t.k ? `M6 ${t.y}h2` : `M5 ${t.y}h4`" stroke="#555" />
          <template v-for="n in vNums" :key="n">
            <path :d="`M2 ${67.5 + n * U}h10`" stroke="#aaa" />
            <text text-anchor="middle" :transform="`translate(11 ${67.5 + n * U}) rotate(-90)`" font-family="Noto Sans" font-size="9.500" fill="#222">{{ Math.abs(n) }}</text>
          </template>
        </svg>
      </aside>
      <div class="canvas">
        <article class="page">
          <div class="headbox">
            <svg class="pm" width="9" height="9"><path d="M4.500.5h4M5 .5V8M7.500.5V8" stroke="#5eaef5" /><path d="M5 0C-.5 0-.5 5 5 5z" fill="#5eaef5" /></svg>
          </div>
          <svg class="corners" width="660" height="22"><path d="M0 21.500h21.500V0M660 21.500h-21.500V0" fill="none" stroke="#b5b5b5" /></svg>
          <div class="textbox">
            <svg v-for="(l, i) in heads" :key="i" class="head" width="615" :height="l.h">
              <text v-for="(w, j) in l.words" :key="j" :x="w[1]" y="31" :textLength="w[2]" lengthAdjust="spacingAndGlyphs" class="hw">{{ w[0] }}</text>
              <path v-for="d in l.dots" :key="d" :d="`M${d - 0.5} 23.500h1`" stroke="#777" />
              <path v-if="l.ret" :d="`M${l.end + 9.5} 19v4.500h-7M${l.end + 4} 20.500l-3 3 3 3`" fill="none" stroke="#2f86e4" stroke-width="1.200" />
              <g v-else :transform="`translate(${l.end} 21)`"><path d="M3 .5h6M5 .5V9M7.500.5V9" stroke="#3b95ea" fill="none" /><path d="M5 0C-1 0-1 5 5 5z" fill="#3b95ea" /></g>
            </svg>
            <div class="pbreak"><i /><Lbl t="Page Break" :w="54" :s="10.5" c="#4397e2" /><i /></div>
          </div>
        </article>
      </div>
      <div class="vscroll">
        <div class="thumb" />
        <svg width="15" height="47">
          <rect x=".5" y=".5" width="13.500" height="46" rx="4" fill="#f4f4f4" stroke="#999" /><path d="M1 16.500h13M1 31.500h13" stroke="#aaa" />
          <path d="M4 8.500h7L7.500 5zM4 12.500h7L7.500 9zM4 35h7l-3.500 3.500zM4 39h7l-3.500 3.500z" fill="#111" stroke="#111" stroke-width=".5" /><circle cx="7.500" cy="24" r="3.200" fill="#ddd" stroke="#666" stroke-width="1.300" />
        </svg>
      </div>
    </main>

    <footer class="foot">
      <div class="views"><div><span v-for="v in views" :key="v" :class="{ sel: v === 'v4' }"><svg width="19" height="14" v-html="icons[v]" /></span></div></div>
      <div class="fright">
        <div class="hscroll"><div /></div>
        <div class="status">
          <div class="s0" />
          <div class="s1"><Lbl t="Sec" :w="16" :s="10.5" /><Lbl t="1" :w="5" :s="10.5" /></div>
          <div class="s2"><Lbl t="Pages:" :w="31" :s="10.5" /><Lbl t="1 of 56" :w="35" :s="10.5" /></div>
          <div class="s3"><Lbl t="Words:" :w="33" :s="10.5" /><Lbl t="0 of 7736" :w="48" :s="10.5" /></div>
          <div class="s4"><svg width="20" height="16" v-html="icons.book" /></div>
          <div class="s5">
            <Lbl t="120%" :w="28" :s="11.5" />
            <svg width="129" height="18"><rect x=".5" y="6.500" width="99" height="4" rx="2" fill="#b3b3b3" stroke="#7d7d7d" /><circle cx="53" cy="8.500" r="5" fill="#eee" stroke="#888" /><circle cx="53" cy="8.500" r="1.600" fill="#555" /><path d="M118 18l10-11M122 18l7-8M126 18l3-4" stroke="#888" /></svg>
          </div>
        </div>
      </div>
    </footer>
  </div>
</template>

<style>
html, body { margin: 0; overflow: hidden; }
</style>

<style scoped>
* { box-sizing: border-box; }
.win { width: 1129px; height: 866px; display: flex; flex-direction: column; background: #ededed; font-family: "Noto Sans", sans-serif; overflow: hidden; }
svg { display: block; flex: none; overflow: visible; }
.defs { position: absolute; }
.chrome { height: 71px; background: linear-gradient(#ececec, #d2d2d2 38%, #b3b3b3); border-bottom: 1px solid #6a6a6a; flex: none; }
.title { height: 23px; display: flex; padding: 4px 3px 0 7px; }
.name { display: flex; gap: 6px; margin: -1px 0 0 418px; }
.name svg:last-child { margin-top: -1px; }
.fs { margin: 0 1px 0 auto; }
.tools { display: flex; height: 48px; align-items: flex-start; padding-top: 3px; }
.tool { display: flex; flex-direction: column; align-items: center; flex: none; }
.ticon { height: 30px; display: flex; align-items: center; justify-content: center; position: relative; width: 100%; }
.ticon + .lbl { margin-top: -1px; }
.pressed { width: 26px; height: 26px; margin: 2px 0; border: 1px solid #6d6d6d; border-radius: 4px; background: linear-gradient(#8f8f8f, #a5a5a5); }
.tsep { flex: none; height: 41px; width: 1px; margin-top: 2px; background: repeating-linear-gradient(#888 0 1px, transparent 1px 3px); }
.caret { display: block; flex: none; width: 0; height: 0; border: 3px solid transparent; border-top: 4px solid #555; border-bottom: 0; }
.tri { display: block; width: 0; height: 0; border: 3px solid transparent; border-bottom: 4px solid #555; border-top: 0; }
.tc { position: absolute; top: 13px; margin-left: -3px; }
.dim { opacity: .55; }
.zoom { width: 52px; margin-left: 7px; }
.zbox { width: 50px; height: 19px; border: 1px solid #999; background: #fff; display: flex; align-items: center; justify-content: space-between; padding-left: 2px; }
.zbox b { width: 14px; height: 17px; border-left: 1px solid #999; background: linear-gradient(#d9d9d9, #b0b0b0); display: flex; align-items: center; justify-content: center; }
.zs { margin-left: 3px; }
.hp { width: 24px; margin-left: 6px; }
.srch { width: 264px; margin-left: 26px; }
.sbox { width: 264px; height: 21px; border: 1px solid #777; border-radius: 11px; display: flex; align-items: center; padding-left: 6px; background: linear-gradient(#f3f3f3, #ddd); }
.sbox > div { flex: 1; height: 19px; border-radius: 10px; background: #fff; border-left: 1px solid #aaa; box-shadow: inset 0 1px 1px #aaa; padding: 3px 0 0 6px; }
.tabs { height: 20px; flex: none; display: flex; background: linear-gradient(#cdd1dc, #b3bacb); border-bottom: 1px solid #8b95ac; padding-left: 11px; }
.tab { border-right: 1px solid #8c93a5; display: flex; align-items: center; justify-content: center; height: 20px; flex: none; }
.tab .lbl { margin-top: -1px; }
.home { width: 75px; gap: 6px; border-left: 1px solid #8c93a5; padding-right: 2px; background: linear-gradient(#dde1eb, #d5deeb); }
.tend { margin-left: auto; width: 58px; height: 19px; border-left: 1px solid #8c93a5; display: flex; align-items: center; padding: 1px 0 0 8px; }
.tend svg + svg { margin: 0 4px 0 11px; }
.ribbonwrap { height: 76px; flex: none; background: #cfdae8; border-bottom: 1px solid #a5b4c4; padding: 3px 3px 2px; }
.ribbon { height: 70px; border-radius: 5px; border: 1px solid #b7bdc6; background: linear-gradient(#f0f0f0, #e4e4e4 35%, #d9d9d9); display: flex; }
.grp { flex: none; height: 68px; background: repeating-linear-gradient(#999 0 1px, transparent 1px 3px) right 4px / 1px 60px no-repeat; }
.grp h6 { margin: 0; height: 13px; display: flex; justify-content: center; padding-right: 3px; border-bottom: 1px solid; border-image: linear-gradient(90deg, transparent, #c9c9c9 30%, #c9c9c9 70%, transparent) 1; }
.grp h6 .lbl { margin-top: -1px; }
.g1 { width: 314px; } .g2 { width: 240px; } .g3 { width: 170px; } .g4 { width: 175px; } .g5 { width: 158px; } .g6 { width: 55px; }
.grp.g1 h6, .grp.g4 h6, .grp.g5 h6 { padding-right: 5px; } .grp.g6 h6 { padding-right: 0; }
.row { display: flex; align-items: center; height: 22px; margin-top: 2px; padding-left: 3px; }
.row + .row { margin-top: 6px; }
.g2 .row { padding-left: 5px; }
.combo { height: 20px; background: #fff; border: 1px solid #999; display: flex; align-items: center; justify-content: space-between; padding-left: 2px; margin-right: 4px; }
.c1 { width: 118px; } .c2 { width: 48px; }
.combo b { width: 14px; height: 18px; border-left: 1px solid #999; background: linear-gradient(#fff, #ddd); display: flex; align-items: center; justify-content: center; }
.btns { display: flex; height: 22px; border: 1px solid #a2a2a2; border-radius: 3px; background: linear-gradient(#fafafa, #d3d3d3); }
.btns span { display: flex; align-items: center; justify-content: center; gap: 3px; height: 20px; border-left: 1px solid #adadad; }
.btns span:first-child { border-left: 0; margin-left: -1px; } .btns span:last-child { margin-right: -1px; }
.btns .on { background: linear-gradient(#929292, #a9a9a9); }
.btns .w9, .btns .w10 { border-left-color: #c4c4c4; }
.w9 { width: 9px; } .w10 { width: 10px; } .w27 { width: 27px; } .w28 { width: 28px; } .w29 { width: 29px; } .w32 { width: 32px; } .w33 { width: 33px; } .w37 { width: 37px; } .w38 { width: 38px; } .w39 { width: 39px; }
.m4 { margin-left: 4px; } .m5 { margin-left: 5px; } .m6 { margin-left: 6px; } .m7 { margin-left: 7px; }
.ser { font: 18px "Liberation Serif", serif; color: #444; }
.bold { font-weight: 700; font-size: 18px; } .ital { font-style: italic; } .und { text-decoration: underline; font-size: 16px; }
.g3 .row { padding-left: 5px; }
.g3 .r2 { padding-left: 4px; }
.num { width: 54px; height: 20px; border: 1px solid #aaa; background: #f2f2f2; display: flex; align-items: center; justify-content: space-between; margin-left: 2px; padding-left: 3px; }
.m5 + .num, .m6 + .num { margin-left: 1px; padding-left: 4px; }
.r2 .m6 { margin-left: 7px; }
.num b { width: 13px; height: 18px; border-left: 1px solid #aaa; background: linear-gradient(#fff, #ddd 49%, #aaa 49%, #aaa 54%, #f5f5f5 54%, #ddd); display: flex; flex-direction: column; align-items: center; justify-content: space-around; }
.styles { display: flex; padding: 1px 0 0 5px; }
.gallery { width: 124px; height: 54px; border: 1px solid #aaa; background: #f4f4f4; display: flex; align-items: center; padding-left: 4px; }
.card { flex: none; width: 71px; height: 48px; border: 2px solid #5d9fd0; border-radius: 3px; background: #fff; margin: 0 7px 0 4px; }
.card > div { height: 30px; padding: 7px 0 0 5px; }
.card p { margin: 0; height: 14px; background: linear-gradient(#eaeaea, #f5f5f5); display: flex; justify-content: center; }
.card p .lbl { margin-top: 1px; }
.side { padding-left: 8px; }
.side div { display: flex; align-items: center; height: 26px; gap: 1px; }
.bigs { display: flex; padding-left: 8px; }
.big { display: flex; flex-direction: column; width: 50px; }
.big > div { height: 36px; display: flex; align-items: center; gap: 5px; }
.b1 { width: 51px; } .b2 > div { gap: 3px; } .b2 > svg { margin-left: 4px; } .b3 { margin-left: -1px; } .b3 > div { gap: 3px; } .b3 > svg { margin-left: 3px; } .big > svg { margin-top: 3px; }
.b1 > svg { margin-left: -1px; }
.th .big > svg { margin: 2px 0 0 1px; } .th .caret { margin-left: -3px; }
.hruler { height: 26px; flex: none; display: flex; background: #ededed; }
.tabbtn { width: 16px; height: 17px; margin: 4px 0 0 4px; border: 1px solid #888; border-radius: 4px; background: #fff; box-shadow: 0 0 0 1px #fff; padding: 3px 0 0 1px; flex: none; }
.hr { margin-left: 185px; }
.split { margin-left: auto; width: 15px; height: 12px; display: flex; flex-direction: column; }
.split i { height: 6px; background: linear-gradient(#b5d7fa, #6aa6e8); border: 1px solid #2c66b0; }
.body { height: 640px; flex: none; display: flex; }
.vruler { width: 22px; padding: 10px 0 0 4px; overflow: hidden; flex: none; }
.canvas { width: 1092px; height: 640px; padding: 13px 0 0 187px; border: 0 solid #8f95a1; border-width: 2px 2px 0; background: linear-gradient(#c0c4d0, #9ba1af 62%); box-shadow: inset 0 0 0 2px rgba(130, 137, 152, .35); overflow: hidden; flex: none; }
.page { width: 712px; height: 640px; background: #fff; box-shadow: 0 0 0 2px #9094a0, 0 0 0 3px #a5a9b5; margin-left: 1px; }
.headbox { margin-left: 54px; width: 616px; height: 40px; background: repeating-linear-gradient(90deg, #777 0 1px, transparent 1px 2px) 0 1px / 100% 1px no-repeat; }
.headbox, .corners { position: relative; }
.pm { padding: 3px 0 0 1px; width: 11px; height: 12px; }
.headbox::after { content: ""; position: absolute; left: 0; right: 0; top: 1px; height: 60px; background: repeating-linear-gradient(#888 0 1px, transparent 1px 2px) left / 1px no-repeat, repeating-linear-gradient(#888 0 1px, transparent 1px 2px) right / 1px no-repeat; }
.corners { margin-left: 32px; }
.textbox { margin-left: 54px; width: 616px; height: 570px; background: repeating-linear-gradient(90deg, #111 0 1px, transparent 1px 2px) top / 100% 1px no-repeat, repeating-linear-gradient(#111 0 1px, transparent 1px 2px) left / 1px no-repeat, repeating-linear-gradient(#111 0 1px, transparent 1px 2px) right / 1px no-repeat; }
.hw { font: 900 28.5px Inter, "Liberation Sans", sans-serif; fill: #000; }
.pbreak { display: flex; align-items: flex-start; height: 14px; }
.pbreak .lbl { margin-top: -1px; }
.pbreak i { flex: 1; height: 1px; background: #3f9cf0; margin-top: 7px; }
.pbreak i:first-child { flex: 0 0 281px; }
.vscroll { width: 15px; background: linear-gradient(90deg, #eee, #fbfbfb); display: flex; flex-direction: column; justify-content: space-between; }
.thumb { width: 8px; height: 27px; border-radius: 4px; background: #bdbdbd; margin: -13px 0 0 4px; position: relative; }
.foot { flex: 1; display: flex; }
.views { width: 178px; background: #e6e6e6; border: 1px solid #cfcfcf; border-left: 0; padding: 4px 0 0 3px; flex: none; }
.views > div { display: flex; width: 171px; height: 24px; border: 1px solid #555; border-radius: 4px; background: linear-gradient(#fdfdfd, #d7d7d7); overflow: hidden; }
.views span { width: 28.300px; display: flex; align-items: center; justify-content: center; border-right: 1px solid #555; }
.views span:last-child { border: 0; }
.views .sel { background: linear-gradient(#444, #6b6b6b); }
.fright { flex: 1; }
.hscroll { height: 15px; background: #ededed; border-top: 1px solid #ddd; }
.hscroll div { width: 937px; height: 14px; background: linear-gradient(#f2f2f2, #fefefe 60%); }
.status { height: 18px; display: flex; border-top: 1px solid #999; background: linear-gradient(#f7f7f7, #e3e5e6 50%, #f0f0f0); }
.status > div { display: flex; justify-content: space-between; align-items: center; border-right: 1px solid #999; box-shadow: inset -1px 0 #fff, inset 1px 0 #fff; }
.status .lbl { margin-top: -1px; }
.status .s5 .lbl { margin-top: 0; }
.s0 { width: 121px; } .s1 { width: 49px; padding: 0 5px 0 6px; } .s2 { width: 118px; padding: 0 19px 0 9px; } .s3 { width: 136px; padding: 0 15px 0 10px; } .s4 { width: 40px; padding-left: 10px; } .status .s5 { flex: 1; border: 0; justify-content: flex-end; gap: 11px; }
</style>
